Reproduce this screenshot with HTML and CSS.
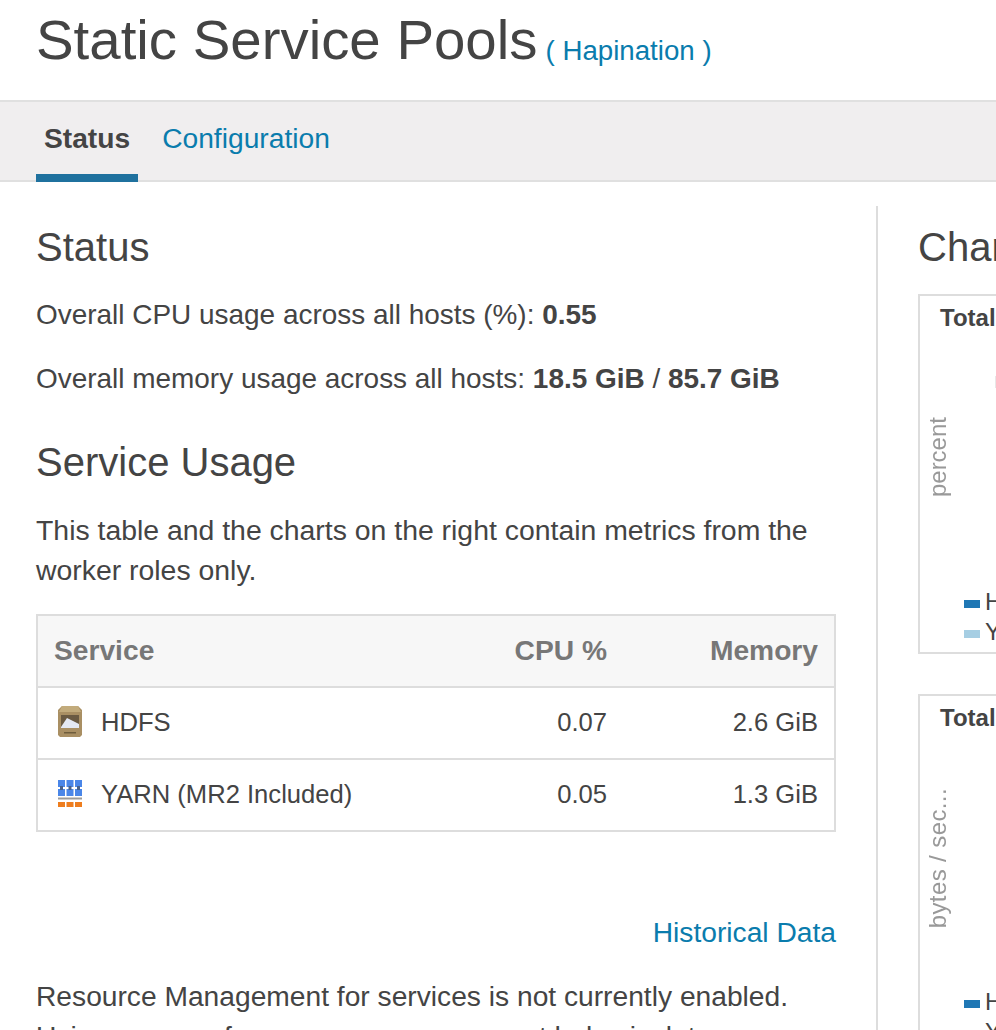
FILE: index.html
```html
<!DOCTYPE html>
<html lang="en">
<head>
  <meta charset="UTF-8" />
  <title>Static Service Pools</title>
  <link rel="stylesheet" href="styles.css">
</head>
<body>
  <header class="page-head">
    <h1>Static Service Pools</h1>
    <a class="cluster" href="#">( Hapination )</a>
  </header>

  <nav class="tabs">
    <a class="tab active" href="#">Status</a>
    <a class="tab" href="#">Configuration</a>
  </nav>

  <div class="columns">
    <main class="left">
      <h2>Status</h2>
      <p class="stat">Overall CPU usage across all hosts (%): <strong>0.55</strong></p>
      <p class="stat">Overall memory usage across all hosts: <strong>18.5 GiB</strong> / <strong>85.7 GiB</strong></p>

      <h2 class="section">Service Usage</h2>
      <p class="intro">This table and the charts on the right contain metrics from the worker roles only.</p>

      <table class="usage">
        <thead>
          <tr><th>Service</th><th class="num col-cpu">CPU %</th><th class="num col-mem">Memory</th></tr>
        </thead>
        <tbody>
          <tr>
            <td>
              <span class="svc">
                <svg class="icon" viewBox="0 0 24 32">
                  <path d="M4 0h16l4 4v25l-2 2H2l-2-2V4z" fill="#a98f63"/>
                  <path d="M4 0h16l3 6H1z" fill="#c2ab7c"/>
                  <path d="M3 9h18v13H3z" fill="#6a5a42"/>
                  <path d="M3 21l6-9 12 6v4H3z" fill="#e4e8f2"/>
                  <path d="M6 26h12v1.500H6z" fill="#6e5c3c"/>
                </svg>
                HDFS
              </span>
            </td>
            <td class="num">0.07</td>
            <td class="num">2.6 GiB</td>
          </tr>
          <tr>
            <td>
              <span class="svc">
                <svg class="icon" viewBox="0 0 24 32">
                  <g fill="#4a86e8">
                    <path d="M0 2h7v7H0zM8.500 2h7v7h-7zM17 2h7v7h-7z"/>
                    <path d="M0 11h7v7H0zM8.500 11h7v7h-7zM17 11h7v7h-7z"/>
                  </g>
                  <path d="M2 8h3v4H2zM10.500 8h3v4h-3zM19 8h3v4h-3z" fill="#47618c"/>
                  <path d="M0 19.500h24v2H0z" fill="#9a9a9a"/>
                  <g fill="#ee7d1e">
                    <path d="M0 24h7v5H0zM8.500 24h7v5h-7zM17 24h7v5h-7z"/>
                  </g>
                </svg>
                YARN (MR2 Included)
              </span>
            </td>
            <td class="num">0.05</td>
            <td class="num">1.3 GiB</td>
          </tr>
        </tbody>
      </table>

      <div class="history"><a href="#">Historical Data</a></div>

      <p class="note">Resource Management for services is not currently enabled. Using cgroups for resource management helps isolate</p>
    </main>

    <aside class="right">
      <h2>Charts</h2>

      <section class="chart">
        <h3>Total CPU Usage</h3>
        <div class="y-label">percent</div>
        <div class="tick"></div>
        <ul class="legend">
          <li><span class="swatch dark"></span>HDFS</li>
          <li><span class="swatch light"></span>YARN</li>
        </ul>
      </section>

      <section class="chart">
        <h3>Total Disk Usage</h3>
        <div class="y-label long">bytes / sec...</div>
        <ul class="legend">
          <li><span class="swatch dark"></span>HDFS</li>
          <li><span class="swatch light"></span>YARN</li>
        </ul>
      </section>
    </aside>
  </div>
</body>
</html>
```

FILE: styles.css
```css
html, body {
  margin: 0;
  height: 1030px;
  overflow: hidden;
}

body {
  font-family: "Liberation Sans", Arial, sans-serif;
  font-size: 28.2px;
  line-height: 40px;
  color: #444;
  background: #fff;
}

a {
  color: #0a7cad;
  text-decoration: none;
}

.page-head {
  display: flex;
  align-items: flex-start;
  height: 100px;
  padding-left: 36px;
  box-sizing: border-box;
}

.page-head h1 {
  margin: 0;
  padding-top: 10px;
  font-size: 56.4px;
  line-height: 60px;
  font-weight: normal;
}

.cluster {
  margin: 31px 0 0 8px;
  font-size: 27.7px;
}

.tabs {
  display: flex;
  height: 82px;
  box-sizing: border-box;
  padding-left: 36px;
  background: #f0eeef;
  border-top: 2px solid #e0e0e0;
  border-bottom: 2px solid #e0e0e0;
}

.tab {
  padding: 16px 8px 0;
  margin-right: 16px;
  height: 80px;
  box-sizing: border-box;
}

.tab.active {
  color: #444;
  font-weight: bold;
  border-bottom: 8px solid #1f719e;
}

.columns {
  display: flex;
  margin-top: 24px;
}

.left {
  flex: none;
  width: 878px;
  height: 850px;
  box-sizing: border-box;
  padding: 19px 40px 0 36px;
  border-right: 2px solid #ddd;
}

.right {
  flex: none;
  width: 400px;
  padding: 19px 0 0 40px;
}

h2 {
  margin: 0 0 26px;
  font-size: 40px;
  line-height: 44px;
  font-weight: normal;
}

h2.section {
  margin: 41px 0 26px;
}

.right h2 {
  margin-bottom: 25px;
}

p {
  margin: 0 0 24px;
}

.stat {
  font-size: 27.95px;
}

.intro {
  font-size: 28.4px;
}

.usage {
  width: 100%;
  table-layout: fixed;
  border-collapse: collapse;
  border: 2px solid #ddd;
}

.usage th,
.usage td {
  height: 72px;
  padding: 0 16px 3px;
  text-align: left;
  box-sizing: border-box;
}

.usage th {
  padding-bottom: 2px;
  color: #777;
  background: #f7f7f7;
  border-bottom: 2px solid #ddd;
}

.usage td {
  font-size: 25.6px;
  border-top: 2px solid #ddd;
}

.usage .num {
  text-align: right;
}

.usage .col-cpu {
  width: 170px;
}

.usage .col-mem {
  width: 212px;
}

.svc {
  display: flex;
  align-items: center;
  gap: 19px;
  margin-left: 4px;
  white-space: nowrap;
}

.icon {
  width: 24px;
  height: 32px;
  flex: none;
  filter: blur(0.5px);
}

.history {
  margin-top: 80px;
  text-align: right;
}

.note {
  margin-top: 24px;
}

.chart {
  position: relative;
  height: 360px;
  margin-bottom: 40px;
  box-sizing: border-box;
  border: 2px solid #ddd;
}

.chart h3 {
  margin: 6px 0 0 20px;
  font-size: 24px;
  line-height: 32px;
}

.y-label {
  position: absolute;
  left: 3px;
  top: 121px;
  font-size: 24px;
  line-height: 30px;
  color: #999;
  writing-mode: vertical-rl;
  transform: rotate(180deg);
}

.y-label.long {
  top: 92px;
  letter-spacing: 0.4px;
}

.tick {
  position: absolute;
  left: 75px;
  top: 80px;
  width: 1px;
  height: 12px;
  background: #e8e8e8;
}

.legend {
  position: absolute;
  left: 44px;
  top: 291px;
  margin: 0;
  padding: 0;
  list-style: none;
  font-size: 24px;
  line-height: 30px;
}

.swatch {
  display: inline-block;
  width: 16px;
  height: 8px;
  margin-right: 5px;
  vertical-align: middle;
}

.swatch.dark { background: #1f77b4; }
.swatch.light { background: #a6cee3; }
```
